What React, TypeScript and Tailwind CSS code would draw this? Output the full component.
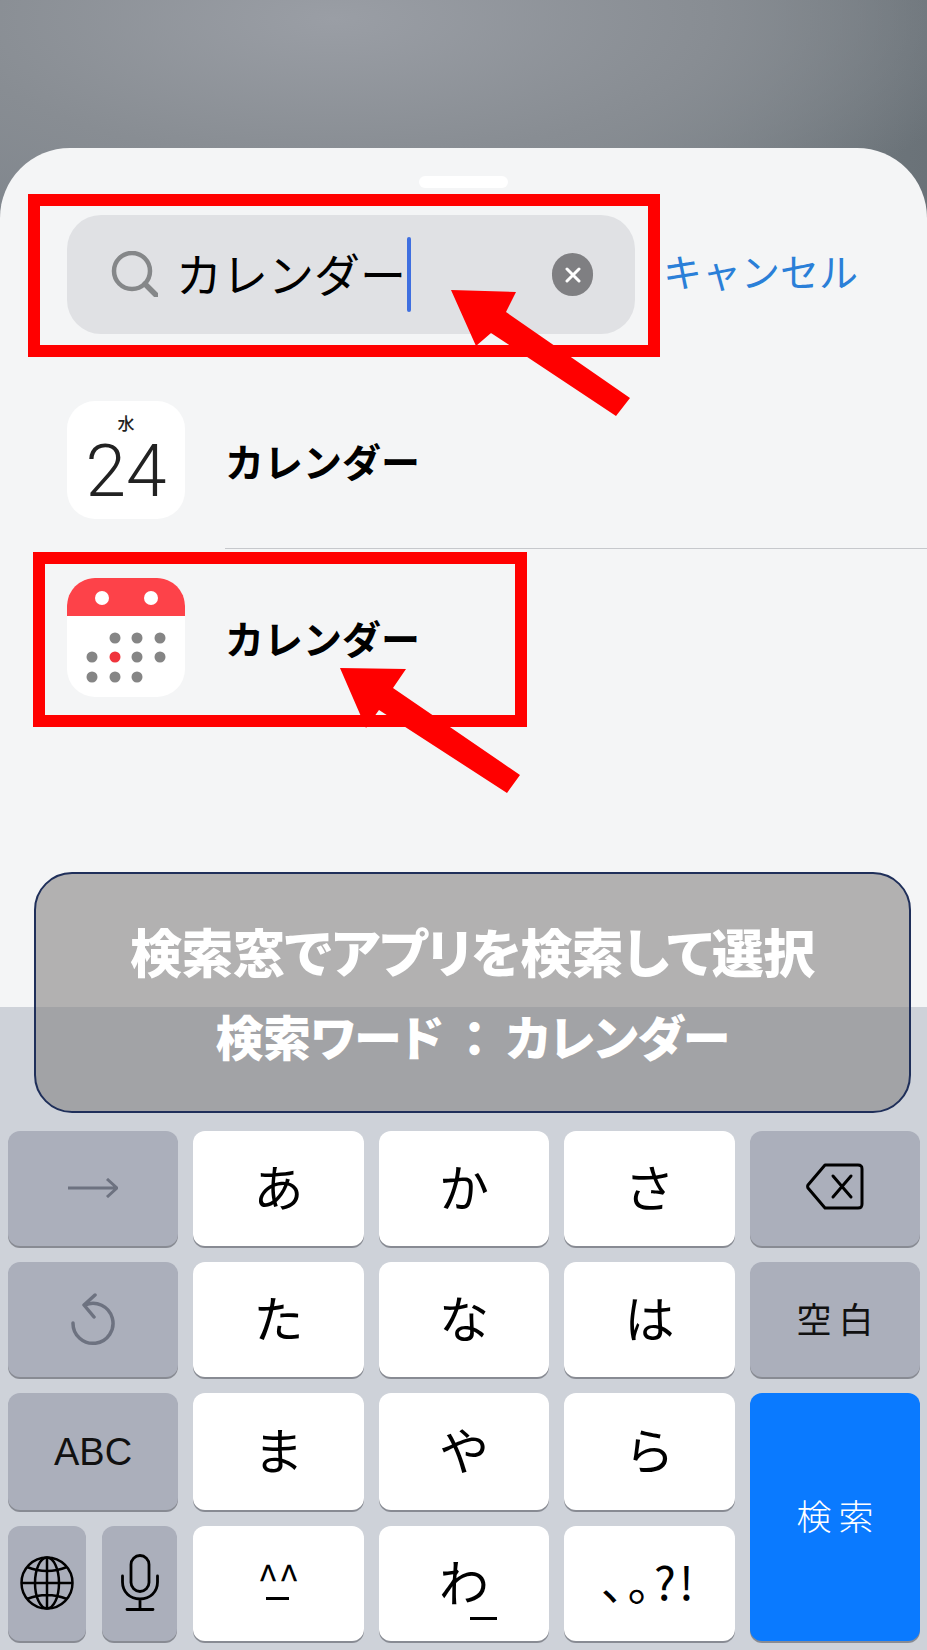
import React from 'react'

const jp = "font-['Noto_Sans_CJK_JP','Liberation_Sans',sans-serif]"

function Key({ children, className = 'bg-white' }: { children: React.ReactNode; className?: string }) {
  return (
    <div className={`relative flex items-center justify-center rounded-[12px] shadow-[0_2px_0_#888b93] ${className}`}>
      {children}
    </div>
  )
}

function Kana({ children }: { children: React.ReactNode }) {
  return <span className="mb-[8px] text-[50px] leading-none text-black">{children}</span>
}

function CalendarDots() {
  const rows = [
    [null, 'g', 'g', 'g'],
    ['g', 'r', 'g', 'g'],
    ['g', 'g', 'g', null],
  ]
  const xs = [25, 48, 70, 93]
  const ys = [60, 79, 99]
  return (
    <svg viewBox="0 0 118 119" className="h-[119px] w-[118px] rounded-[28px] bg-white">
      <path d="M0 38V28C0 10 10 0 28 0H90C108 0 118 10 118 28V38Z" fill="#fd4249" />
      <circle cx="35" cy="20" r="7" fill="#fff" />
      <circle cx="84" cy="20" r="7" fill="#fff" />
      {rows.map((r, i) =>
        r.map((c, j) =>
          c ? <circle key={`${i}-${j}`} cx={xs[j]} cy={ys[i]} r="5.5" fill={c === 'r' ? '#f0343c' : '#858585'} /> : null,
        ),
      )}
    </svg>
  )
}

export default function App() {
  return (
    <div
      className={`relative flex h-[1650px] w-[927px] flex-col overflow-hidden bg-[radial-gradient(ellipse_at_36%_8%,#9a9ea5_0%,#888d93_45%,transparent_80%),linear-gradient(90deg,#7f858c,#7f868b_60%,#6a7278)] bg-[length:100%_240px] bg-no-repeat ${jp}`}
    >
      <div className="mt-[148px] flex flex-1 flex-col rounded-t-[70px] bg-[#f4f5f6]">
        <div className="mx-auto mt-[28px] h-[12px] w-[89px] rounded-md bg-white" />

        <div className="mt-[27px] flex items-center pl-[67px]">
          <div className="flex h-[119px] w-[568px] items-center rounded-[34px] bg-[#e0e1e4] pl-[44px]">
            <svg viewBox="0 0 47 46" className="mb-[2px] h-[46px] w-[47px]" fill="none" stroke="#858789" strokeWidth="4.5">
              <circle cx="21" cy="20" r="18" />
              <path d="M34 33 45 44" strokeLinecap="round" strokeWidth="5.5" />
            </svg>
            <span className="mb-[6px] ml-[18px] text-[46px] leading-none text-black">カレンダー</span>
            <div className="ml-[1px] h-[75px] w-[4px] rounded-full bg-[#3f6fe0]" />
            <div className="ml-[141px] flex h-[43px] w-[41px] items-center justify-center rounded-full bg-[#7f7f82]">
              <svg viewBox="0 0 16 16" className="h-[16px] w-[16px]" stroke="#fff" strokeWidth="3" strokeLinecap="round">
                <path d="M2 2 14 14M14 2 2 14" />
              </svg>
            </div>
          </div>
          <span className="mb-[8px] ml-[28px] text-[39px] leading-none text-[#2a7fd8]">キャンセル</span>
        </div>

        <div className="mt-[67px] flex items-center pb-[29px] pl-[67px]">
          <div className="flex h-[118px] w-[118px] flex-col items-center rounded-[28px] bg-white text-[#222]">
            <span className="mt-[10px] text-[17px] font-medium leading-[24px]">水</span>
            <span className="mt-[6px] font-['Roboto',sans-serif] text-[73px] font-light leading-[60px]">24</span>
          </div>
          <span className="ml-[40px] text-[39px] font-bold leading-none text-black">カレンダー</span>
        </div>
        <div className="ml-[225px] h-px bg-[#c6c8cc]" />
        <div className="mt-[29px] flex items-center pl-[67px]">
          <CalendarDots />
          <span className="ml-[40px] text-[39px] font-bold leading-none text-black">カレンダー</span>
        </div>

        <div className="mt-auto grid h-[643px] grid-cols-5 grid-rows-[115px_115px_117px_115px] content-start gap-x-[15.25px] gap-y-4 bg-[#ced2d9] pl-2 pr-[7px] pt-[124px]">
          <Key className="bg-[#abafbb]">
            <svg viewBox="0 0 50 20" className="mb-[2px] h-[20px] w-[50px]" fill="none" stroke="#6d7280" strokeWidth="3">
              <path d="M0 10H48M39 1 49 10 39 19" />
            </svg>
          </Key>
          <Key><Kana>あ</Kana></Key>
          <Key><Kana>か</Kana></Key>
          <Key><Kana>さ</Kana></Key>
          <Key className="bg-[#abafbb]">
            <svg viewBox="0 0 58 47" className="mb-[4px] h-[47px] w-[58px]" fill="none" stroke="#000" strokeWidth="3" strokeLinejoin="round">
              <path d="M19 2H52C55 2 56 3 56 6V41C56 44 55 45 52 45H19L2 25C1.500 24 1.500 23 2 22Z" />
              <path d="M27 13 45 34M45 13 27 34" strokeLinecap="round" />
            </svg>
          </Key>

          <Key className="bg-[#abafbb]">
            <svg viewBox="0 0 45 53" className="h-[53px] w-[45px]" fill="none" stroke="#6d7280" strokeWidth="3.500" strokeLinecap="round" strokeLinejoin="round">
              <path d="M2 30A20 20 0 1 0 14 12" />
              <path d="M24 2 13 12 23 24" />
            </svg>
          </Key>
          <Key><Kana>た</Kana></Key>
          <Key><Kana>な</Kana></Key>
          <Key><Kana>は</Kana></Key>
          <Key className="bg-[#abafbb]">
            <span className="mb-[4px] mr-[-7px] text-[35px] leading-none tracking-[7px] text-[#111]">空白</span>
          </Key>

          <Key className="bg-[#abafbb]">
            <span className="font-['Liberation_Sans',sans-serif] text-[38px] leading-none text-[#111]">ABC</span>
          </Key>
          <Key><Kana>ま</Kana></Key>
          <Key><Kana>や</Kana></Key>
          <Key><Kana>ら</Kana></Key>
          <Key className="row-span-2 bg-[#0a7aff]">
            <span className="mb-[6px] mr-[-7px] text-[35px] font-light leading-none tracking-[7px] text-white">検索</span>
          </Key>

          <div className="grid grid-cols-[78px_75px] gap-x-4">
            <Key className="bg-[#abafbb]">
              <svg viewBox="0 0 54 54" className="mb-[2px] h-[54px] w-[54px]" fill="none" stroke="#000" strokeWidth="2.500">
                <circle cx="27" cy="27" r="25.500" />
                <ellipse cx="27" cy="27" rx="12" ry="25.500" />
                <path d="M27 1.500V52.500M1.500 27H52.500M7 11Q27 19 47 11M7 43Q27 35 47 43" />
              </svg>
            </Key>
            <Key className="bg-[#abafbb]">
              <svg viewBox="0 0 38 57" className="mb-[3px] h-[57px] w-[38px]" fill="none" stroke="#000" strokeWidth="2.800" strokeLinecap="round">
                <rect x="10" y="1.500" width="18" height="36" rx="9" />
                <path d="M1.500 22V28C1.500 38 9 45 19 45S36.500 38 36.500 28V22M19 45V55M6 55.500H32" />
              </svg>
            </Key>
          </div>
          <Key>
            <span className="mb-[14px] text-[38px] leading-none text-black">^^</span>
            <div className="absolute left-[73px] top-[71px] h-[3px] w-[23px] bg-black" />
          </Key>
          <Key>
            <Kana>わ</Kana>
            <div className="absolute left-[91px] top-[91px] h-[3px] w-[27px] bg-black" />
          </Key>
          <Key>
            <span className="mb-[8px] text-[46px] leading-none tracking-[3px] text-black">､｡?!</span>
          </Key>
        </div>
      </div>

      {/* annotation overlays */}
      <div className="absolute left-[28px] top-[194px] h-[163px] w-[632px] border-[12px] border-[#ff0000]" />
      <div className="absolute left-[33px] top-[552px] h-[175px] w-[494px] border-[12px] border-[#ff0000]" />
      <svg viewBox="0 0 927 1650" className="absolute left-0 top-0 h-[1650px] w-[927px]" fill="#ff0000">
        <path d="M451 290 516 292 506 312 630 398 616 416 491 333 476 346Z" />
        <path d="M340 668 406 669 393 688 520 775 507 793 379 710 366 728Z" />
      </svg>
      <div className="absolute left-[34px] top-[872px] flex h-[241px] w-[877px] flex-col items-center justify-center gap-[32px] rounded-[38px] border-[2px] border-[#1f2f5a] bg-[#858484]/60 font-black leading-[52px] tracking-[-0.5px] text-white [font-feature-settings:'palt']">
        <span className="text-[52px]">検索窓でアプリを検索して選択</span>
        <span className="text-[48px]">検索ワード<span className="mx-[20px]">：</span>カレンダー</span>
      </div>
    </div>
  )
}
